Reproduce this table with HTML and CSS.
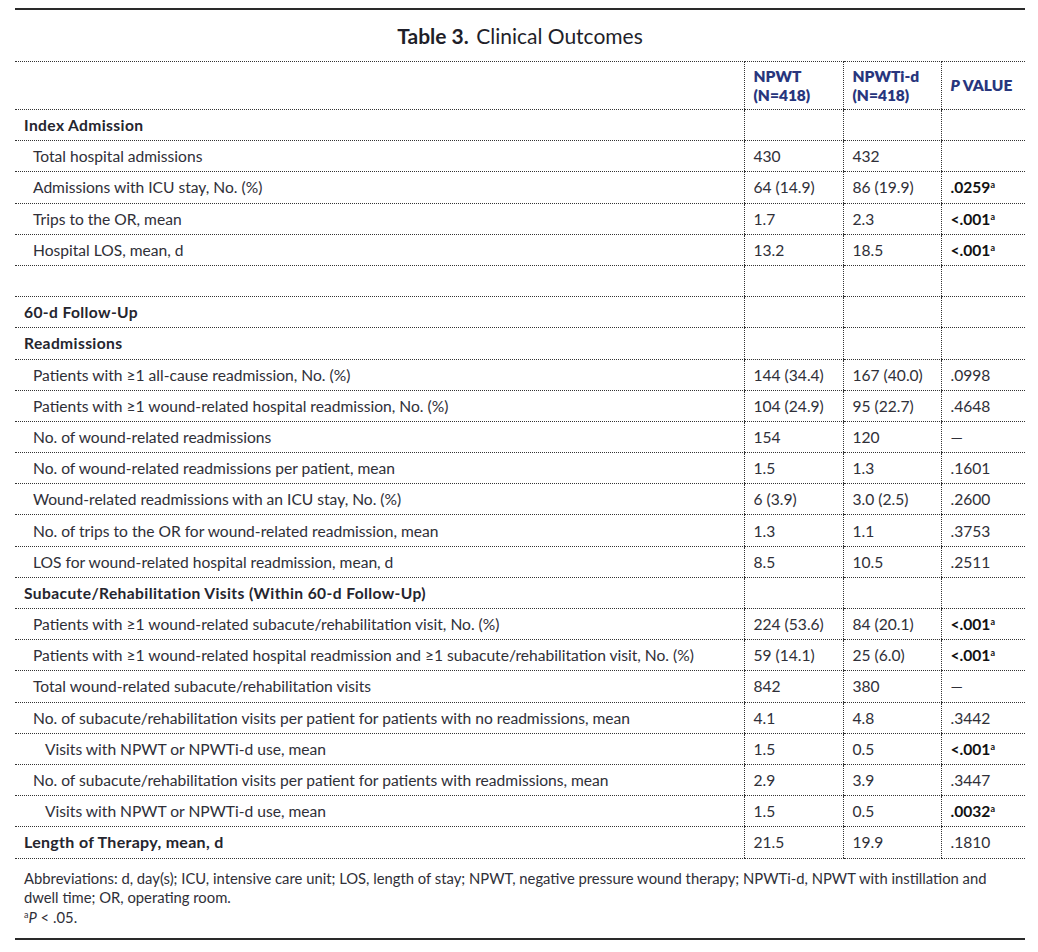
FILE: index.html
```html
<!DOCTYPE html>
<html>
<head>
<meta charset="utf-8">
<link rel="stylesheet" href="styles.css">
</head>
<body>
<div class="wrap">
  <div class="title"><b>Table 3.</b> Clinical Outcomes</div>
  <table class="tbl">
    <colgroup>
      <col class="c-label"><col class="c-num"><col class="c-num2"><col class="c-p">
    </colgroup>
    <thead>
      <tr><th></th><th>NPWT<br>(N=418)</th><th>NPWTi-d<br>(N=418)</th><th><i>P</i> VALUE</th></tr>
    </thead>
    <tbody>
      <tr class="sec"><td>Index Admission</td><td></td><td></td><td></td></tr>
      <tr><td class="i1">Total hospital admissions</td><td>430</td><td>432</td><td></td></tr>
      <tr><td class="i1">Admissions with ICU stay, No. (%)</td><td>64 (14.9)</td><td>86 (19.9)</td><td class="sig">.0259<sup>a</sup></td></tr>
      <tr><td class="i1">Trips to the OR, mean</td><td>1.7</td><td>2.3</td><td class="sig">&lt;.001<sup>a</sup></td></tr>
      <tr><td class="i1">Hospital LOS, mean, d</td><td>13.2</td><td>18.5</td><td class="sig">&lt;.001<sup>a</sup></td></tr>
      <tr><td></td><td></td><td></td><td></td></tr>
      <tr class="sec"><td>60-d Follow-Up</td><td></td><td></td><td></td></tr>
      <tr class="sec"><td>Readmissions</td><td></td><td></td><td></td></tr>
      <tr><td class="i1">Patients with ≥1 all-cause readmission, No. (%)</td><td>144 (34.4)</td><td>167 (40.0)</td><td>.0998</td></tr>
      <tr><td class="i1">Patients with ≥1 wound-related hospital readmission, No. (%)</td><td>104 (24.9)</td><td>95 (22.7)</td><td>.4648</td></tr>
      <tr><td class="i1">No. of wound-related readmissions</td><td>154</td><td>120</td><td>—</td></tr>
      <tr><td class="i1">No. of wound-related readmissions per patient, mean</td><td>1.5</td><td>1.3</td><td>.1601</td></tr>
      <tr><td class="i1">Wound-related readmissions with an ICU stay, No. (%)</td><td>6 (3.9)</td><td>3.0 (2.5)</td><td>.2600</td></tr>
      <tr><td class="i1">No. of trips to the OR for wound-related readmission, mean</td><td>1.3</td><td>1.1</td><td>.3753</td></tr>
      <tr><td class="i1">LOS for wound-related hospital readmission, mean, d</td><td>8.5</td><td>10.5</td><td>.2511</td></tr>
      <tr class="sec"><td>Subacute/Rehabilitation Visits (Within 60-d Follow-Up)</td><td></td><td></td><td></td></tr>
      <tr><td class="i1">Patients with ≥1 wound-related subacute/rehabilitation visit, No. (%)</td><td>224 (53.6)</td><td>84 (20.1)</td><td class="sig">&lt;.001<sup>a</sup></td></tr>
      <tr><td class="i1">Patients with ≥1 wound-related hospital readmission and ≥1 subacute/rehabilitation visit, No. (%)</td><td>59 (14.1)</td><td>25 (6.0)</td><td class="sig">&lt;.001<sup>a</sup></td></tr>
      <tr><td class="i1">Total wound-related subacute/rehabilitation visits</td><td>842</td><td>380</td><td>—</td></tr>
      <tr><td class="i1">No. of subacute/rehabilitation visits per patient for patients with no readmissions, mean</td><td>4.1</td><td>4.8</td><td>.3442</td></tr>
      <tr><td class="i2">Visits with NPWT or NPWTi-d use, mean</td><td>1.5</td><td>0.5</td><td class="sig">&lt;.001<sup>a</sup></td></tr>
      <tr><td class="i1">No. of subacute/rehabilitation visits per patient for patients with readmissions, mean</td><td>2.9</td><td>3.9</td><td>.3447</td></tr>
      <tr><td class="i2">Visits with NPWT or NPWTi-d use, mean</td><td>1.5</td><td>0.5</td><td class="sig">.0032<sup>a</sup></td></tr>
      <tr class="sec big"><td>Length of Therapy, mean, d</td><td>21.5</td><td>19.9</td><td>.1810</td></tr>
    </tbody>
  </table>
  <div class="notes">
    <p>Abbreviations: d, day(s); ICU, intensive care unit; LOS, length of stay; NPWT, negative pressure wound therapy; NPWTi-d, NPWT with instillation and dwell time; OR, operating room.</p>
    <p><sup>a</sup><i>P</i> &lt; .05.</p>
  </div>
</div>
</body>
</html>
```
FILE: styles.css
```css
html, body {
  margin: 0;
  padding: 0;
  background: #fff;
}
body {
  font-family: "Lato", "Open Sans", sans-serif;
  color: #2f2f38;
}
.wrap {
  margin: 8px 13px 0 15px;
  border-top: 2px solid #2a2a2a;
  border-bottom: 2px solid #2a2a2a;
  width: 1010px;
}
.title {
  text-align: center;
  font-size: 21px;
  color: #1f1f2a;
  padding-top: 13px;
  height: 37px;
  box-sizing: border-box;
}
.title b {
  font-weight: 700;
  margin-right: 2px;
}
.tbl {
  width: 100%;
  border-collapse: collapse;
  table-layout: fixed;
  font-size: 15.6px;
  margin-top: 14px;
}
.c-label { width: 729px; }
.c-num { width: 99px; }
.c-num2 { width: 98px; }
.c-p { width: 84px; }
.tbl th, .tbl td {
  border-top: 1px dotted #333;
  border-bottom: 1px dotted #333;
  padding: 0 0 0 9px;
  text-align: left;
  vertical-align: middle;
  white-space: nowrap;
}
.tbl th + th, .tbl td + td {
  border-left: 1px dotted #333;
}
.tbl th {
  color: #28367d;
  font-weight: 800;
  height: 47px;
  line-height: 19px;
  font-size: 15.5px;
}
.tbl td {
  height: 30.2px;
  line-height: 20px;
}
.tbl td.i1 { padding-left: 18px; }
.tbl td.i2 { padding-left: 30px; }
.sec td:first-child {
  font-weight: 700;
  color: #25252e;
  letter-spacing: 0.38px;
}
.big td:first-child { font-size: 16px; letter-spacing: 0.3px; }
.sig {
  font-weight: 700;
  color: #111;
}
sup {
  font-size: 9px;
  vertical-align: 5px;
  line-height: 0;
}
.notes {
  padding: 10px 9px 11px;
  font-size: 14.8px;
  line-height: 19.5px;
}
.notes p { margin: 0; }
```
